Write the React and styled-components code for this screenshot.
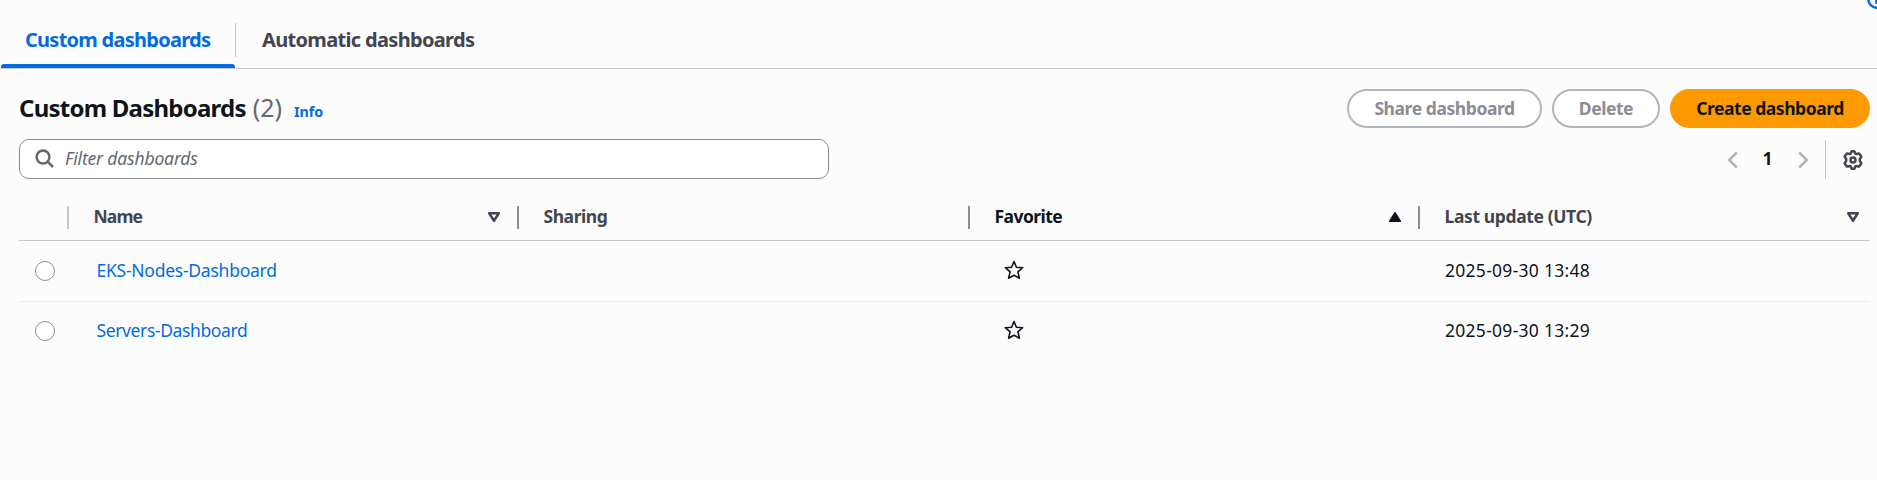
import React from 'react';
import styled, { createGlobalStyle } from 'styled-components';

const c = {
  bg: '#fcfcfd',
  link: '#006ce0',
  text: '#0f141a',
  muted: '#424650',
  subtle: '#656871',
  line: '#c6c6cd',
  strong: '#8c8c94',
  disabled: '#b4b4bb',
  orange: '#ff9900',
};

const BOLD = 670;

const Global = createGlobalStyle`
  * { box-sizing: border-box; }
  body {
    margin: 0;
    background: ${c.bg};
    color: ${c.text};
    font: 400 17.5px/24px "Noto Sans", "Open Sans", sans-serif;
    overflow: hidden;
  }
`;

const Page = styled.main`
  position: relative;
  height: 480px;
  overflow: hidden;
`;

const InfoBadge = styled.svg`
  position: absolute;
  top: -11px;
  right: -10px;
  width: 20px;
  height: 20px;
`;

const Label = styled.span`
  padding-bottom: 2px;
  white-space: nowrap;
  letter-spacing: ${(p) => p.$ls || 0}px;
`;

const Tabs = styled.nav`
  display: flex;
  height: 69px;
  padding-left: 1px;
  border-bottom: 1px solid ${c.line};
`;

const Tab = styled.div`
  width: ${(p) => p.$width}px;
  height: 68px;
  padding: 25px 0 0 ${(p) => p.$indent}px;
  font-size: 20px;
  font-weight: ${BOLD};
  line-height: 30px;
  color: ${(p) => (p.$active ? c.link : c.muted)};
  display: flex;
  flex-direction: column;
  justify-content: space-between;
`;

const TabUnderline = styled.i`
  height: 4px;
  margin-left: -${(p) => p.$indent}px;
  border-radius: 3px 3px 0 0;
  background: ${c.link};
`;

const TabDivider = styled.i`
  width: 1px;
  height: 34px;
  margin-top: 23px;
  background: ${c.line};
`;

const HeaderBar = styled.header`
  display: flex;
  align-items: center;
  justify-content: space-between;
  height: 39px;
  margin: 20px 7px 0 19px;
`;

const Heading = styled.h2`
  display: flex;
  align-items: baseline;
  margin: 0;
  padding-top: 2px;
  font-size: 24px;
  font-weight: ${BOLD};
  line-height: 30px;
`;

const Counter = styled(Label)`
  margin-left: 7px;
  font-size: 25px;
  font-weight: 400;
  color: ${c.subtle};
`;

const InfoLink = styled.a`
  margin-left: 12px;
  font-size: 14.3px;
  letter-spacing: -0.1px;
  color: ${c.link};
`;

const Actions = styled.div`
  display: flex;
  gap: 10px;
`;

const Button = styled.button`
  display: flex;
  align-items: center;
  justify-content: center;
  width: ${(p) => p.$width}px;
  height: 39px;
  padding: 0;
  border: 2px solid ${(p) => (p.$primary ? c.orange : c.disabled)};
  border-radius: 20px;
  background: ${(p) => (p.$primary ? c.orange : '#fff')};
  color: ${(p) => (p.$primary ? c.text : c.strong)};
  font: inherit;
  font-weight: ${BOLD};
`;

const Toolbar = styled.div`
  display: flex;
  justify-content: space-between;
  align-items: center;
  height: 40px;
  margin: 11px 7px 0 19px;
`;

const Search = styled.div`
  display: flex;
  align-items: center;
  gap: 10px;
  width: 810px;
  height: 40px;
  padding-left: 15px;
  border: 1px solid ${c.strong};
  border-radius: 10px;
  background: #fff;
  color: ${c.subtle};
  font-style: italic;
`;

const Pager = styled.div`
  display: flex;
  align-items: center;
  height: 40px;
  padding: 1px 7px 0 0;
`;

const PageNumber = styled(Label)`
  width: 60px;
  padding-right: 1px;
  text-align: center;
  font-size: 17px;
  font-weight: ${BOLD};
`;

const PagerDivider = styled.i`
  width: 1px;
  height: 39px;
  margin: 0 17px 0 16px;
  background: ${c.line};
`;

const Table = styled.section`
  margin: 15px 7px 0 19px;
`;

const Row = styled.div`
  display: grid;
  grid-template-columns: 48px 450px 451px 450px 1fr;
  height: ${(p) => p.$height}px;
  border-bottom: ${(p) => (p.$last ? 0 : 1)}px solid ${(p) => (p.$head ? c.line : '#ebebf0')};
`;

const HeadCell = styled.div`
  display: flex;
  align-items: center;
  justify-content: space-between;
  padding: 0 ${(p) => p.$end || 0}px 0 26.5px;
  font-weight: ${BOLD};
  color: ${(p) => (p.$sorted ? c.text : c.muted)};
  background: linear-gradient(${(p) => (p.$faint ? c.line : c.strong)} 0 0) 0 12px / 2px 23px no-repeat;
`;

const Cell = styled.div`
  display: flex;
  align-items: center;
  padding-left: ${(p) => p.$indent}px;
`;

const Radio = styled.span`
  width: 20px;
  height: 20px;
  border: 1.5px solid ${c.strong};
  border-radius: 50%;
  background: #fff;
`;

const Link = styled(Label).attrs({ as: 'a' })`
  color: ${c.link};
`;

const Chevron = ({ flip }) => (
  <svg width="11" height="18" viewBox="0 0 11 18" fill="none" stroke={c.disabled} strokeWidth="2.5">
    <path d={flip ? 'M1.2 1.5 8.8 9l-7.6 7.5' : 'M9.8 1.5 2.2 9l7.6 7.5'} />
  </svg>
);

const SearchIcon = () => (
  <svg width="20" height="20" viewBox="0 0 20 20" fill="none" stroke={c.subtle} strokeWidth="2.5">
    <circle cx="8" cy="8" r="6.4" />
    <path d="m12.4 12.4 5.6 5.6" />
  </svg>
);

const Gear = () => (
  <svg width="20" height="20" viewBox="0 0 20 20" fill="none" stroke={c.muted} strokeWidth="2.5" strokeLinejoin="round">
    <path d="M8 2.9 Q8.2 1.2 9.2 1.2 H10.8 Q11.8 1.2 12 2.9 Q12.5 4.4 14 3.8 Q15.7 3 16.5 3.9 L18 6 Q18.700 7.1 17.4 8.100 Q16 10 17.4 11.900 Q18.700 12.900 18 14 L16.5 16.1 Q15.7 17 14 16.200 Q12.500 15.600 12 17.100 Q11.800 18.800 10.800 18.800 H9.200 Q8.200 18.800 8 17.100 Q7.500 15.600 6 16.200 Q4.300 17 3.500 16.100 L2 14 Q1.300 12.900 2.600 11.900 Q4 10 2.600 8.100 Q1.300 7.100 2 6 L3.500 3.900 Q4.300 3 6 3.800 Q7.500 4.400 8 2.900 Z" />
    <circle cx="10" cy="10" r="2.500" />
  </svg>
);

const SortIcon = ({ asc }) => (
  <svg width="14" height="12" viewBox="0 0 14 12" strokeLinejoin="round">
    {asc ? (
      <path d="M7 2 12.2 10.2H1.8Z" fill={c.text} stroke={c.text} strokeWidth="1.8" />
    ) : (
      <path d="M2.2 2.3h9.6L7 9.7Z" fill="none" stroke={c.muted} strokeWidth="2.5" />
    )}
  </svg>
);

const StarIcon = styled.svg`
  margin-bottom: 2px;
`;

const Star = () => (
  <StarIcon width="20" height="20" viewBox="0 0 20 20" fill="none" stroke={c.text} strokeWidth="1.6" strokeLinejoin="round">
    <path d="m10 1.5 2.4 5.7 6.300.5-4.800 4.100 1.500 6.400L10 15.200l-5.400 3 1.500-6.400-4.800-4.100 6.300-.5Z" />
  </StarIcon>
);

const rows = [
  { name: 'EKS-Nodes-Dashboard', ls: -0.25, updated: '2025-09-30 13:48', height: 61 },
  { name: 'Servers-Dashboard', ls: -0.38, updated: '2025-09-30 13:29', height: 58, last: true },
];

export default function App() {
  return (
    <Page>
      <Global />
      <InfoBadge viewBox="0 0 20 20" fill="none" stroke={c.link} strokeWidth="2.5">
        <circle cx="10" cy="10" r="8.8" />
        <path d="M10 9v6M10 5v2" strokeWidth="3.5" />
      </InfoBadge>
      <Tabs>
        <Tab $active $indent={24} $width={234}>
          <Label $ls={-0.74}>Custom dashboards</Label>
          <TabUnderline $indent={24} />
        </Tab>
        <TabDivider />
        <Tab $indent={26} $width={260}>
          <Label $ls={-0.67}>Automatic dashboards</Label>
        </Tab>
      </Tabs>

      <HeaderBar>
        <Heading>
          <Label $ls={-0.76}>Custom Dashboards</Label>
          <Counter>(2)</Counter>
          <InfoLink>Info</InfoLink>
        </Heading>
        <Actions>
          <Button $width={195}><Label $ls={-0.43}>Share dashboard</Label></Button>
          <Button $width={108}><Label $ls={-0.45}>Delete</Label></Button>
          <Button $width={200} $primary><Label $ls={-0.46}>Create dashboard</Label></Button>
        </Actions>
      </HeaderBar>

      <Toolbar>
        <Search>
          <SearchIcon />
          <Label $ls={-0.16}>Filter dashboards</Label>
        </Search>
        <Pager>
          <Chevron />
          <PageNumber>1</PageNumber>
          <Chevron flip />
          <PagerDivider />
          <Gear />
        </Pager>
      </Toolbar>

      <Table>
        <Row $head $height={47}>
          <span />
          <HeadCell $faint $end={16}><Label $ls={-0.9}>Name</Label><SortIcon /></HeadCell>
          <HeadCell><Label $ls={-0.45}>Sharing</Label></HeadCell>
          <HeadCell $sorted $end={16}><Label $ls={-0.55}>Favorite</Label><SortIcon asc /></HeadCell>
          <HeadCell $end={10}><Label $ls={-0.38}>Last update (UTC)</Label><SortIcon /></HeadCell>
        </Row>
        {rows.map((r) => (
          <Row key={r.name} $height={r.height} $last={r.last}>
            <Cell $indent={16}><Radio /></Cell>
            <Cell $indent={29.5}><Link $ls={r.ls}>{r.name}</Link></Cell>
            <Cell />
            <Cell $indent={36}><Star /></Cell>
            <Cell $indent={27}><Label $ls={0.28}>{r.updated}</Label></Cell>
          </Row>
        ))}
      </Table>
    </Page>
  );
}
